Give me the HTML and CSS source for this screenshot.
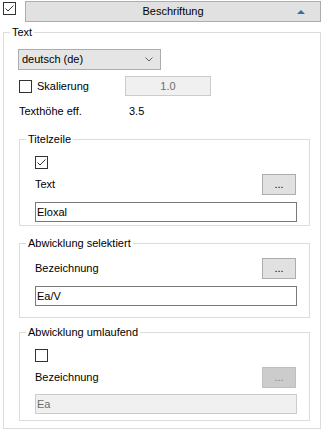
FILE: index.html
```html
<!DOCTYPE html>
<html>
<head>
	<meta charset="UTF-8">
	<title>Beschriftung</title>
	<link rel="stylesheet" href="styles.css">
</head>
<body>
	<div class="panel">
		<div class="panel-head">
			<span class="chk chk-head"><svg width="11" height="11" viewBox="0 0 11 11"><polyline points="1.5,5.5 4,8 9.5,2.5" fill="none" stroke="#333" stroke-width="1"/></svg></span>
			<div class="head-btn">Beschriftung<span class="head-arrow"></span></div>
		</div>
		<fieldset class="grp grp-main">
			<legend>Text</legend>
			<div class="grp-body main-body">
				<div class="combo">
					<span>deutsch (de)</span>
					<svg class="combo-arrow" width="8" height="5" viewBox="0 0 8 5"><polyline points="0.5,0.5 4,4 7.5,0.5" fill="none" stroke="#606060" stroke-width="1"/></svg>
				</div>
				<div class="row-scale">
					<label class="chk-label"><span class="chk"></span>Skalierung</label>
					<input type="text" class="num" value="1.0" disabled>
				</div>
				<div class="row-eff"><span>Texthöhe eff.</span><span>3.5</span></div>

				<fieldset class="grp grp-sub">
					<legend>Titelzeile</legend>
					<div class="grp-body sub-title">
						<span class="chk"><svg width="11" height="11" viewBox="0 0 11 11"><polyline points="1.5,5.5 4,8 9.5,2.5" fill="none" stroke="#333" stroke-width="1"/></svg></span>
						<div class="row-field"><span>Text</span><button class="dots">...</button></div>
						<input type="text" class="txt" value="Eloxal">
					</div>
				</fieldset>

				<fieldset class="grp grp-sub grp-sel">
					<legend>Abwicklung selektiert</legend>
					<div class="grp-body sub-sel">
						<div class="row-field row-first"><span>Bezeichnung</span><button class="dots">...</button></div>
						<input type="text" class="txt" value="Ea/V">
					</div>
				</fieldset>

				<fieldset class="grp grp-sub grp-run">
					<legend>Abwicklung umlaufend</legend>
					<div class="grp-body sub-run">
						<span class="chk"></span>
						<div class="row-field"><span>Bezeichnung</span><button class="dots" disabled>...</button></div>
						<input type="text" class="txt" value="Ea" disabled>
					</div>
				</fieldset>
			</div>
		</fieldset>
	</div>
</body>
</html>
```

FILE: styles.css
```css
*{
	margin:0;padding:0;box-sizing:border-box;
}
body{
	background:#fff;color:#000;
	font-family:"Liberation Sans",Arial,sans-serif;font-size:11px;line-height:13px;
}
.panel{
	width:321px;padding-left:3px;padding-top:1px;
}
.panel-head{
	display:flex;align-items:flex-start;height:21px;
}
.chk{
	display:inline-flex;align-items:center;justify-content:center;
	width:13px;height:13px;border:1px solid #333;background:#fff;flex:none;
}
.chk-head{
	margin-top:1px;
}
.head-btn{
	position:relative;margin-left:9px;width:296px;height:21px;
	background:#e1e1e1;border:1px solid #adadad;
	text-align:center;line-height:19px;
}
.head-arrow{
	position:absolute;right:15px;top:8px;width:0;height:0;
	border-left:4px solid transparent;border-right:4px solid transparent;
	border-bottom:4px solid #2f6ea8;
}
.grp{
	border:1px solid #dcdcdc;margin:0;padding:0;min-width:0;
}
.grp legend{
	margin-left:6px;padding:0 2px;line-height:13px;
}
.grp-main{
	margin-top:4px;width:318px;
}
.main-body{
	padding:10px 10px 7px 15px;
}
.combo{
	display:flex;align-items:center;justify-content:space-between;
	margin-left:-1px;width:143px;height:21px;
	background:#e5e5e5;border:1px solid #acacac;padding:0 7px 0 3px;
}
.row-scale{
	display:flex;align-items:center;margin-top:6px;height:20px;
}
.chk-label{
	display:flex;align-items:center;width:106px;
}
.chk-label .chk{
	margin-right:5px;
}
.num{
	width:86px;height:20px;border:1px solid #cccccc;background:#f0f0f0;
	color:#6d6d6d;text-align:center;font:inherit;outline:0;
}
.row-eff{
	display:grid;grid-template-columns:110px auto;margin-top:9px;
}
.grp-sub{
	align-self:stretch;margin-top:15px;
}
.grp-sel{
	margin-top:11px;
}
.grp-run{
	margin-top:8px;
}
.grp-body{
	display:flex;flex-direction:column;align-items:flex-start;
}
.sub-title,.sub-sel,.sub-run{
	padding:10px 12px 3px 15px;
}
.sub-sel{
	padding-top:8px;padding-bottom:11px;
}
.sub-run{
	padding-bottom:6px;
}
.row-field{
	display:flex;align-items:center;justify-content:space-between;
	width:100%;height:21px;margin-top:5px;
}
.row-first{
	margin-top:0;
}
.dots{
	width:34px;height:21px;margin-right:1px;
	background:#e1e1e1;border:1px solid #adadad;
	font:inherit;color:#000;line-height:17px;
}
.dots:disabled{
	background:#cccccc;border-color:#bfbfbf;color:#838383;
}
.txt{
	width:100%;height:20px;margin-top:7px;padding:0 1px;
	border:1px solid #7a7a7a;background:#fff;color:#000;font:inherit;outline:0;
}
.txt:disabled{
	margin-top:6px;border-color:#cccccc;background:#f0f0f0;color:#6d6d6d;
}
```
